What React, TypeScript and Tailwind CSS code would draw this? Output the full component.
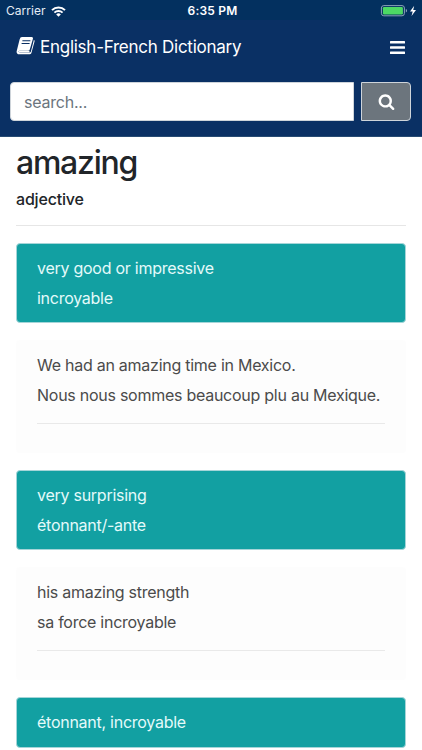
import React from 'react';

interface Entry {
  meaning: string[];
  examples?: string[];
}

const entries: Entry[] = [
  {
    meaning: ['very good or impressive', 'incroyable'],
    examples: ['We had an amazing time in Mexico.', 'Nous nous sommes beaucoup plu au Mexique.'],
  },
  {
    meaning: ['very surprising', 'étonnant/-ante'],
    examples: ['his amazing strength', 'sa force incroyable'],
  },
  { meaning: ['étonnant, incroyable'] },
];

const StatusBar: React.FC = () => (
  <div className="flex h-5 items-center justify-between bg-[#03305f] pl-[6px] pr-[5px] pt-[2px] text-white">
    <div className="flex w-[100px] items-center gap-[5px]">
      <span className="text-[12px] tracking-[0.05px] text-[#e4edf5]">Carrier</span>
      <svg className="h-[11px] w-[15px]" viewBox="0 0 15 11" fill="none" stroke="currentColor">
        <path d="M1 4.1a9.2 9.2 0 0 1 13 0" strokeWidth="2" />
        <path d="M3.4 6.7a5.8 5.8 0 0 1 8.2 0" strokeWidth="1.8" />
        <path d="M7.5 10.8 5.2 8.4a3.3 3.3 0 0 1 4.6 0z" fill="currentColor" stroke="none" />
      </svg>
    </div>
    <span className="pl-[2px] text-[12px] font-semibold tracking-[0.2px]">6:35 PM</span>
    <div className="flex w-[100px] items-center justify-end">
      <svg className="h-[12px] w-[37px]" viewBox="0 0 37 12" fill="none">
        <rect x="1.4" y="0.6" width="23" height="10.2" rx="2.4" stroke="#8ba3b8" />
        <rect x="2.9" y="2" width="20" height="7.4" rx="1.2" fill="#4cd964" />
        <path d="M25.8 4q1.3.4 1.3 1.7t-1.3 1.7z" fill="#8ba3b8" />
        <path d="M34.2.8 30 6.6h2.7L31.5 11l4.5-6h-2.8z" fill="#fff" />
      </svg>
    </div>
  </div>
);

const Header: React.FC = () => (
  <header className="h-[117px] border-b border-[#274b73] bg-[#0a3064]">
    <div className="flex h-[54px] items-center justify-between pl-[16px] pr-[17px] text-white">
      <div className="flex items-center gap-1">
        <svg className="mb-[2px] h-5 w-5" viewBox="0 0 20 20" fill="none">
          <path d="M6 1h9.6q1.8 0 1.4 1.6l-3.2 11q-.4 1.2-1.8 1.2H3.6q-1 0-1 .8t1.2.8h9.8q1 0 1.3-1l3-11.6q.9.5.7 1.5l-3.2 11.6q-.4 1.3-1.8 1.3H3.2Q.5 18.200.6 15.400 L3.600 3.400Q4.200 1 6 1z" fill="#fff" />
          <path d="M2.900 15.600H13.500" stroke="#fff" strokeWidth="1.6" />
          <path d="M6.800 4.700h7.200M6 7.500h7.200" stroke="#0a3064" strokeWidth="1.100" strokeLinecap="round" />
        </svg>
        <h1 className="pt-[2px] text-[17px] tracking-[-0.26px]">English-French Dictionary</h1>
      </div>
      <button className="h-[13px] w-[15px]" aria-label="Menu">
        <svg className="h-[13px] w-[15px]" viewBox="0 0 15 13" fill="currentColor">
          <rect width="15" height="2.6" rx="0.5" />
          <rect y="5.2" width="15" height="2.6" rx="0.5" />
          <rect y="10.4" width="15" height="2.6" rx="0.5" />
        </svg>
      </button>
    </div>
    <form className="flex gap-[7px] pl-[10px] pr-[11px] pt-[8px]">
      <input
        className="h-[39px] min-w-0 flex-1 rounded-l-[4px] border border-[#ced4da] bg-white px-[13px] text-[16px] tracking-[-0.22px] text-[#6c757d] outline-none placeholder:text-[#6c757d]"
        placeholder="search..."
      />
      <button
        type="button"
        className="flex h-[39px] w-[50px] items-center justify-center rounded-r-[4px] border border-[#ced4da] bg-[#6c757d] text-white"
        aria-label="Search"
      >
        <svg className="h-[17px] w-[17px]" viewBox="0 0 1792 1792" fill="currentColor">
          <path d="M1216 832q0-185-131.5-316.5t-316.5-131.5-316.5 131.5-131.5 316.5 131.5 316.5 316.5 131.5 316.5-131.5 131.5-316.5zm512 832q0 52-38 90t-90 38q-54 0-90-38l-343-342q-179 124-399 124-143 0-273.5-55.5t-225-150-150-225-55.5-273.5 55.5-273.5 150-225 225-150 273.5-55.5 273.5 55.5 225 150 150 225 55.5 273.5q0 220-124 399l343 343q37 37 37 90z" />
        </svg>
      </button>
    </form>
  </header>
);

export default function App() {
  return (
    <div className="h-[750px] w-[422px] overflow-hidden bg-white font-['Inter',sans-serif] text-[#212529]">
      <StatusBar />
      <Header />
      <main className="px-4 pt-[6px]">
        <h2 className="text-[32px] leading-[40px] font-medium tracking-[-1.25px]">amazing</h2>
        <p className="mt-[6px] text-[16px] leading-[20px] font-medium tracking-[-0.18px]">adjective</p>
        <hr className="mt-[16px] border-[#e6e6e6]" />
        <div className="mt-[17px] flex flex-col gap-[17px] text-[16px] leading-[29.5px] tracking-[-0.26px]">
          {entries.map((entry) => (
            <React.Fragment key={entry.meaning[0]}>
              <div className="rounded-[4px] border border-[#a5d5d8] bg-[#12a0a2] px-5 pt-[10px] pb-[9px] text-[#e4fafa]">
                {entry.meaning.map((line) => (
                  <p key={line}>{line}</p>
                ))}
              </div>
              {entry.examples && (
                <div className="h-[113px] rounded-[4px] border border-[#fdfdfd] bg-[#fdfdfd] px-5 pt-[10px] text-[#4b4b4b]">
                  {entry.examples.map((line) => (
                    <p key={line} className="whitespace-nowrap">
                      {line}
                    </p>
                  ))}
                  <hr className="mt-[13px] border-[#e9e9e9]" />
                </div>
              )}
            </React.Fragment>
          ))}
        </div>
      </main>
    </div>
  );
}
